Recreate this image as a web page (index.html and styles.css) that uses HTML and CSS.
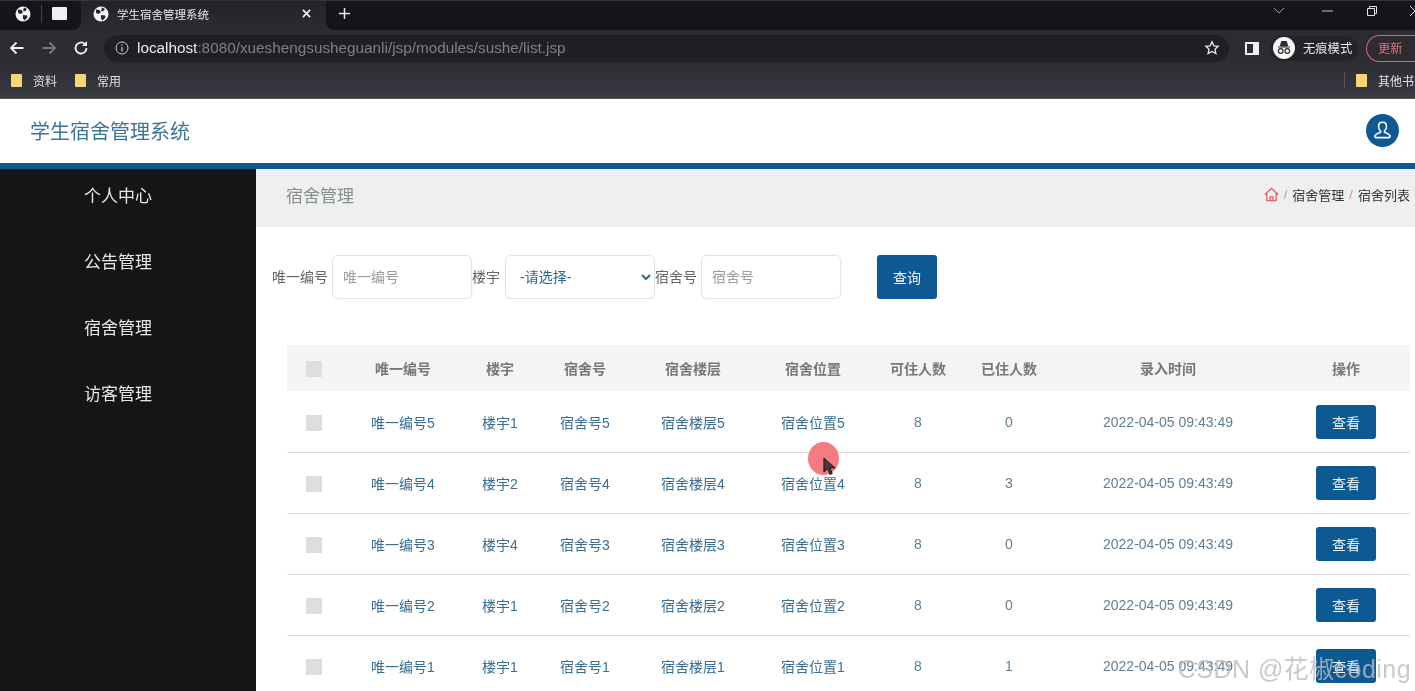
FILE: index.html
```html
<!DOCTYPE html>
<html lang="zh-CN">
<head>
<meta charset="utf-8">
<title>学生宿舍管理系统</title>
<link rel="stylesheet" href="styles.css">
</head>
<body>
<div class="browser">
  <div class="tabbar">
    <div class="tabbar-left">
      <svg class="globe" viewBox="0 0 16 16"><circle cx="8" cy="8" r="7.5" fill="#f4f4f4"/><path d="M3 3.5l3.5.5 1.500 2-2 2-3-1zM9 1.500l3 1.500-2 2.500-2-1zM8 9l4 .5 .5 2-3 3-1.500-2z" fill="#26272b"/></svg>
      <span class="tab-sep"></span>
      <span class="tab-square"></span>
    </div>
    <div class="tab">
      <svg class="globe" viewBox="0 0 16 16"><circle cx="8" cy="8" r="7.500" fill="#f4f4f4"/><path d="M3 3.500l3.500.5 1.500 2-2 2-3-1zM9 1.500l3 1.500-2 2.500-2-1zM8 9l4 .5 .5 2-3 3-1.500-2z" fill="#26272b"/></svg>
      <span class="tab-title">学生宿舍管理系统</span>
      <svg class="tab-close" viewBox="0 0 10 10"><path d="M1 1l8 8M9 1l-8 8" stroke="#f0f0f0" stroke-width="1.800"/></svg>
    </div>
    <div class="tabbar-right">
      <svg class="tab-plus" viewBox="0 0 14 14"><path d="M7 1v12M1 7h12" stroke="#e8e8e8" stroke-width="1.600"/></svg>
      <div class="window-controls">
        <svg class="wc-chevron" viewBox="0 0 12 8"><path d="M1 1l5 5 5-5" fill="none" stroke="#9a9a9a" stroke-width="1"/></svg>
        <svg class="wc-min" viewBox="0 0 12 2"><path d="M0 1h12" stroke="#d5d5d5" stroke-width="1"/></svg>
        <svg class="wc-restore" viewBox="0 0 10 10"><path d="M.5 2.500h7v7h-7zM2.500 2.500v-2h7v7h-2" fill="none" stroke="#e5e5e5" stroke-width="1"/></svg>
        <svg class="wc-close" viewBox="0 0 10 10"><path d="M0 0l10 10M10 0l-10 10" stroke="#e5e5e5" stroke-width="1"/></svg>
      </div>
    </div>
  </div>
  <div class="toolbar">
    <svg class="nav-icon" viewBox="0 0 16 16"><path d="M14.500 8H2M7.500 2.500L2 8l5.500 5.500" fill="none" stroke="#f2f2f2" stroke-width="1.800"/></svg>
    <svg class="nav-icon" viewBox="0 0 16 16"><path d="M1.500 8H14M8.500 2.500L14 8l-5.500 5.500" fill="none" stroke="#77787b" stroke-width="1.800"/></svg>
    <svg class="nav-icon" viewBox="0 0 16 16"><path d="M13.500 8a5.500 5.500 0 1 1-1.600-3.900" fill="none" stroke="#f2f2f2" stroke-width="1.800"/><path d="M14 1v5h-5z" fill="#f2f2f2"/></svg>
    <div class="omnibox">
      <svg class="info-icon" viewBox="0 0 14 14"><circle cx="7" cy="7" r="6" fill="none" stroke="#d0d0d0" stroke-width="1"/><path d="M7 6v4.500M7 3.500v1.300" stroke="#d0d0d0" stroke-width="1.200"/></svg>
      <span class="url"><span class="url-host">localhost</span>:8080/xueshengsusheguanli/jsp/modules/sushe/list.jsp</span>
      <svg class="star" viewBox="0 0 16 16"><path d="M8 1.800l1.900 4 4.300.5-3.200 3 .9 4.300L8 11.400l-3.900 2.200.9-4.300-3.200-3 4.300-.5z" fill="none" stroke="#e8e8e8" stroke-width="1.300"/></svg>
    </div>
    <span class="panel-icon"></span>
    <div class="incognito">
      <svg class="incognito-icon" viewBox="0 0 22 22"><circle cx="11" cy="11" r="11" fill="#f5f5f5"/><path d="M5 10h12M7.500 9l1-4.500h5l1 4.500z" stroke="#2a2a2e" stroke-width="1" fill="#2a2a2e"/><circle cx="7.700" cy="14" r="2.300" fill="none" stroke="#2a2a2e" stroke-width="1.200"/><circle cx="14.300" cy="14" r="2.300" fill="none" stroke="#2a2a2e" stroke-width="1.200"/></svg>
      <span class="incognito-label">无痕模式</span>
    </div>
    <span class="update-btn">更新</span>
  </div>
  <div class="bookmarks">
    <span class="bookmark"><span class="folder"></span>资料</span>
    <span class="bookmark"><span class="folder"></span>常用</span>
    <span class="bookmark-sep"></span>
    <span class="bookmark bookmark-other"><span class="folder"></span>其他书</span>
  </div>
</div>

<header class="site-header">
  <h1 class="site-title">学生宿舍管理系统</h1>
  <span class="avatar">
    <svg viewBox="0 0 20 20"><path d="M10 2.200c-2.500 0-3.800 1.800-3.800 4 0 1.800.8 3.300 1.900 4.200v1.300c-1.800.8-4.600 1.500-5.300 3.300-.2.700 0 1.800 1 1.800h12.400c1 0 1.200-1.100 1-1.800-.7-1.800-3.500-2.500-5.300-3.300v-1.300c1.100-.9 1.900-2.400 1.900-4.200 0-2.200-1.300-4-3.800-4z" fill="none" stroke="#fff" stroke-width="1.500"/></svg>
  </span>
</header>

<div class="app">
  <nav class="sidebar">
    <a class="side-item">个人中心</a>
    <a class="side-item">公告管理</a>
    <a class="side-item">宿舍管理</a>
    <a class="side-item">访客管理</a>
  </nav>
  <main class="content">
    <div class="page-head">
      <span class="page-title">宿舍管理</span>
      <div class="crumbs">
        <svg class="home-icon" viewBox="0 0 16 16"><path d="M1 8l7-6.500L15 8M3 6.500V14.500h10V6.500M6.500 14.500v-4h3v4" fill="none" stroke="#e5606a" stroke-width="1.400"/></svg>
        <span class="crumb-sep">/</span><span>宿舍管理</span><span class="crumb-sep">/</span><span>宿舍列表</span>
      </div>
    </div>
    <form class="search">
      <label class="search-label">唯一编号</label>
      <input class="field" placeholder="唯一编号">
      <label class="search-label">楼宇</label>
      <select class="field field-select"><option>-请选择-</option></select>
      <label class="search-label">宿舍号</label>
      <input class="field" placeholder="宿舍号">
      <button type="button" class="btn btn-search">查询</button>
    </form>
    <table class="grid">
      <colgroup>
        <col class="c1"><col class="c2"><col class="c3"><col class="c4"><col class="c5"><col class="c6"><col class="c7"><col class="c8"><col class="c9"><col class="c10">
      </colgroup>
      <thead>
        <tr>
          <th><span class="check"></span></th><th>唯一编号</th><th>楼宇</th><th>宿舍号</th><th>宿舍楼层</th><th>宿舍位置</th><th>可住人数</th><th>已住人数</th><th>录入时间</th><th>操作</th>
        </tr>
      </thead>
      <tbody>
        <tr><td><span class="check"></span></td><td>唯一编号5</td><td>楼宇1</td><td>宿舍号5</td><td>宿舍楼层5</td><td>宿舍位置5</td><td>8</td><td>0</td><td>2022-04-05 09:43:49</td><td><button type="button" class="btn btn-view">查看</button></td></tr>
        <tr><td><span class="check"></span></td><td>唯一编号4</td><td>楼宇2</td><td>宿舍号4</td><td>宿舍楼层4</td><td>宿舍位置4</td><td>8</td><td>3</td><td>2022-04-05 09:43:49</td><td><button type="button" class="btn btn-view">查看</button></td></tr>
        <tr><td><span class="check"></span></td><td>唯一编号3</td><td>楼宇4</td><td>宿舍号3</td><td>宿舍楼层3</td><td>宿舍位置3</td><td>8</td><td>0</td><td>2022-04-05 09:43:49</td><td><button type="button" class="btn btn-view">查看</button></td></tr>
        <tr><td><span class="check"></span></td><td>唯一编号2</td><td>楼宇1</td><td>宿舍号2</td><td>宿舍楼层2</td><td>宿舍位置2</td><td>8</td><td>0</td><td>2022-04-05 09:43:49</td><td><button type="button" class="btn btn-view">查看</button></td></tr>
        <tr><td><span class="check"></span></td><td>唯一编号1</td><td>楼宇1</td><td>宿舍号1</td><td>宿舍楼层1</td><td>宿舍位置1</td><td>8</td><td>1</td><td>2022-04-05 09:43:49</td><td><button type="button" class="btn btn-view">查看</button></td></tr>
      </tbody>
    </table>
  </main>
</div>

<div class="pointer">
  <svg class="cursor" viewBox="0 0 14 20"><path d="M1 1v15l4-3.500 2.500 6 2.500-1-2.500-6H13z" fill="#4a3a40" stroke="#111" stroke-width="1"/></svg>
</div>
<div class="watermark">CSDN @花椒coding</div>
</body>
</html>
```
FILE: styles.css
```css
* { box-sizing: border-box; }
html, body { margin: 0; height: 691px; overflow: hidden; background: #fff; }
body { font-family: "Liberation Sans", "Noto Sans CJK SC", sans-serif; font-size: 13px; color: #333; position: relative; filter: blur(.35px); }

.browser { height: 99px; background: linear-gradient(#222327 0, #2b2c31 28px, #2c2c32 62px, #3a3a44 98px); color: #e8e8e8; border-bottom: 1px solid #55555c; }
.tabbar { height: 30px; display: flex; border-top: 1px solid #34353a; }
.tabbar-left { display: flex; align-items: center; padding: 0 0 4px 15px; width: 81px; height: 100%; background: #141518; border-radius: 0 0 8px 0; }
.globe { width: 16px; height: 16px; flex: none; }
.tab-sep { width: 1px; height: 18px; background: #444; margin: 0 10px; }
.tab-square { width: 15px; height: 13px; background: #efefef; border-radius: 1px; }
.tab { width: 245px; height: 100%; display: flex; align-items: center; padding: 0 0 4px 12px; }
.tab-title { font-size: 11.500px; color: #e6e6e6; margin-left: 8px; flex: 1; }
.tab-close { width: 9px; height: 9px; margin-right: 15px; }
.tabbar-right { flex: 1; display: flex; align-items: center; height: 100%; background: #141518; border-radius: 0 0 0 8px; padding: 0 0 4px 12px; }
.tab-plus { width: 13px; height: 13px; }
.window-controls { margin-left: auto; display: flex; align-items: center; height: 100%; padding-bottom: 6px; }
.wc-chevron { width: 12px; height: 8px; margin-right: 37px; }
.wc-min { width: 11px; height: 2px; margin-right: 34px; }
.wc-restore { width: 10px; height: 10px; margin-right: 33px; }
.wc-close { width: 10px; height: 10px; margin-right: -5px; }

.toolbar { height: 36px; display: flex; align-items: center; padding-left: 9px; }
.nav-icon { width: 16px; height: 16px; margin-right: 16px; flex: none; }
.omnibox { width: 1125px; height: 27px; background: #1f2024; border-radius: 14px; display: flex; align-items: center; margin-left: -1px; padding: 0 9px 0 11px; flex: none; }
.info-icon { width: 14px; height: 14px; flex: none; }
.url { font-size: 15.300px; color: #7f8084; margin-left: 8px; flex: 1; white-space: nowrap; }
.url-host { color: #ececec; }
.star { width: 16px; height: 16px; }
.panel-icon { width: 14px; height: 13px; border: 2px solid #f0f0f0; border-right-width: 6px; margin-left: 16px; flex: none; }
.incognito { display: flex; align-items: center; width: 88px; height: 25px; margin-left: 11px; flex: none; background: #232428; border-radius: 13px; padding-left: 3px; }
.incognito-icon { width: 22px; height: 22px; flex: none; }
.incognito-label { font-size: 12.300px; color: #e8e8e8; margin-left: 8px; white-space: nowrap; }
.update-btn { width: 60px; height: 27px; border: 1px solid #c96d7c; border-right: 0; border-radius: 14px 0 0 14px; color: #d9747e; font-size: 12.300px; line-height: 27px; padding-left: 11px; margin-left: 8px; flex: none; background: #2e2a30; }

.bookmarks { height: 32px; display: flex; align-items: center; padding: 0 0 4px 11px; }
.bookmark { display: flex; align-items: center; font-size: 12px; color: #e0e0e0; margin-right: 18px; white-space: nowrap; }
.folder { width: 11px; height: 13px; background: #f7d774; border-radius: 1px; margin-right: 11px; flex: none; }
.bookmark-sep { margin-left: auto; width: 1px; height: 16px; background: #55555c; margin-right: 11px; }
.bookmark-other { margin-right: 0; width: 59px; }
.bookmark-other .folder { margin-right: 11px; }

.site-header { height: 70px; background: #fff; border-bottom: 6px solid #0d5a92; display: flex; align-items: center; justify-content: space-between; padding: 0 16px 1px 30px; }
.site-title { margin: 0; font-size: 20px; font-weight: 400; color: #3d7599; }
.avatar { width: 33px; height: 33px; border-radius: 50%; background: #0d5a92; display: flex; align-items: center; justify-content: center; }
.avatar svg { width: 21px; height: 21px; }

.app { display: flex; height: 522px; }
.sidebar { width: 256px; background: #141615; flex: none; display: flex; flex-direction: column; }
.side-item { height: 66px; line-height: 56px; padding-left: 84px; font-size: 17px; color: #e6e6e6; }
.content { flex: 1; min-width: 0; }

.page-head { height: 58px; background: #eeefef; display: flex; align-items: center; justify-content: space-between; padding: 0 5px 7px 30px; }
.page-title { font-size: 17px; color: #8a8d90; }
.crumbs { display: flex; align-items: center; font-size: 13px; color: #333; }
.home-icon { width: 15px; height: 15px; }
.crumb-sep { color: #e58a92; margin: 0 5px; }

.search { display: flex; align-items: center; height: 44px; margin: 28px 0 0 16px; }
.search-label { font-size: 14px; color: #666; margin-right: 4px; margin-top: -3px; }
.field { width: 140px; height: 44px; border: 1px solid #e3e4e8; border-radius: 6px; background: #fff; padding: 0 10px; font: 14px "Liberation Sans", "Noto Sans CJK SC", sans-serif; color: #2e6b93; margin-right: 0; box-shadow: 0 0 3px rgba(0,0,0,.06); }
.field::placeholder { color: #9a9ca0; opacity: 1; }
.field-select { width: 150px; padding-left: 10px; margin-left: 1px; }
.btn { border: 0; background: #0d5a92; color: #f0f4f8; font: 14px "Liberation Sans", "Noto Sans CJK SC", sans-serif; border-radius: 3px; }
.btn-search { width: 60px; height: 44px; margin-left: 36px; }

.grid { width: 1123px; margin: 46px 0 0 31px; border-collapse: separate; border-spacing: 0; table-layout: fixed; }
.c1 { width: 54px; } .c2 { width: 124px; } .c3 { width: 70px; } .c4 { width: 100px; } .c5 { width: 116px; }
.c6 { width: 124px; } .c7 { width: 86px; } .c8 { width: 96px; } .c9 { width: 222px; } .c10 { width: 131px; }
.grid th { height: 47px; background: #f3f4f5; background-clip: padding-box; border-bottom: 1px solid #fff; font-size: 14px; font-weight: 700; color: #777; text-align: center; padding: 0; }
.grid td { height: 61px; border-bottom: 1px solid #dcdde0; text-align: center; font-size: 14px; color: #3a6f92; padding: 0; }
.grid td:nth-child(n+7):nth-child(-n+9) { color: #5f7f95; }
.grid th:last-child, .grid td:last-child { padding-left: 3px; }
.check { display: inline-block; width: 16px; height: 16px; background: #dcdee0; vertical-align: middle; }
.btn-view { width: 60px; height: 34px; }

.pointer { position: absolute; left: 808px; top: 442px; width: 31px; height: 33px; border-radius: 50%; background: #f47b7f; }
.cursor { position: absolute; left: 15px; top: 15px; width: 13px; height: 19px; }
.watermark { position: absolute; right: 4px; top: 649px; font-size: 25px; color: rgba(185,187,190,.8); white-space: nowrap; letter-spacing: .45px; }
```
